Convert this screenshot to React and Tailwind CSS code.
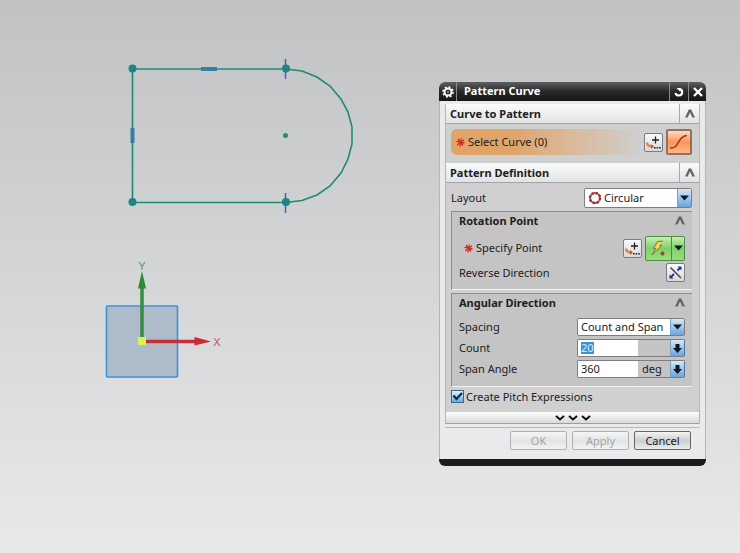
import React, { useEffect, useRef, useState } from "react";

function Sketch() {
  return (
    <svg
      width="740"
      height="553"
      viewBox="0 0 740 553"
      className="absolute left-0 top-0"
      fill="none"
    >
      {/* profile */}
      <g stroke="#1f8a72" strokeWidth="1.6">
        <path d="M286 69H132.500V202.500H286" />
        <path d="M286 69L302 71L317 77L330 86L341 99L348 112L352 127V144L348 159L341 173L330 186L317 195L302 200.500L286 202.500" />
      </g>
      <path
        d="M285.500 59V79M285.500 193V213"
        stroke="#4560b8"
        strokeWidth="1.500"
      />
      <path d="M201 69H217M132.500 128V143" stroke="#3580a2" strokeWidth="4" />
      <g fill="#1d8585">
        <circle cx="132.500" cy="68.500" r="4" />
        <circle cx="286" cy="68.500" r="4" />
        <circle cx="132.500" cy="202" r="4" />
        <circle cx="286" cy="202" r="4" />
      </g>
      <circle cx="285.500" cy="135.500" r="2.500" fill="#1f9070" />

      {/* coordinate system */}
      <rect
        x="106.500"
        y="306"
        width="71"
        height="71"
        rx="1"
        fill="#adbcc8"
        stroke="#3c92d6"
        strokeWidth="1.600"
      />
      <path d="M142 338V286" stroke="#358c42" strokeWidth="3.500" />
      <path d="M142 271L146 288.500H138Z" fill="#2e8a35" />
      <path d="M145 341.500H196" stroke="#c23038" strokeWidth="3.500" />
      <path d="M211 341.500L194.500 337V345.500Z" fill="#cc2b30" />
      <rect x="138" y="337" width="8" height="8" fill="#d6f25a" />
      <text
        x="142"
        y="270"
        textAnchor="middle"
        fill="#5a9465"
        className="font-['Liberation_Sans'] text-[11px]"
      >
        Y
      </text>
      <text
        x="217"
        y="346"
        textAnchor="middle"
        fill="#c4525a"
        className="font-['Liberation_Sans'] text-[11px]"
      >
        X
      </text>
    </svg>
  );
}

function Chevron() {
  return (
    <svg width="10" height="9" viewBox="0 0 10 9" fill="#666">
      <path d="M0 8.500L3.800 0.500H6.200L10 8.500H7.300L5 3.600L2.700 8.500Z" />
    </svg>
  );
}

function Required() {
  return (
    <svg width="9" height="9" viewBox="0 0 9 9" stroke="#d02a22" strokeWidth="1.300">
      <path d="M5.200 0.300L4 8.500M0.500 3.300L8.500 5M8 1.800L1.200 7M2 1L4.500 4.500L7 7.500" />
    </svg>
  );
}

function SectionHeader({ title }) {
  return (
    <div className="flex h-[19px] items-stretch bg-linear-to-b from-[#fbfbfb] to-[#e2e3e5]">
      <h2 className="flex-1 pl-1 font-bold leading-[19px]">{title}</h2>
      <button
        aria-label={`Collapse ${title}`}
        className="flex w-5 items-center justify-center border-l border-[#a8a8aa]"
      >
        <Chevron />
      </button>
    </div>
  );
}

function GroupHeader({ title }) {
  return (
    <div className="flex h-[17px] items-center justify-between">
      <h3 className="font-bold">{title}</h3>
      <button aria-label={`Collapse ${title}`}>
        <Chevron />
      </button>
    </div>
  );
}

function PointButton() {
  return (
    <button
      aria-label="Point Constructor"
      className="h-[19px] w-[19px] rounded-xs border border-[#7c7c80] bg-linear-to-b from-[#fafafa] to-[#d8d8dc]"
    >
      <svg width="17" height="17" viewBox="0 0 17 17">
        <path d="M7 6H14M10.500 2.500V9.500" stroke="#222" strokeWidth="1.300" />
        <path
          d="M2 8.500C2 11.500 4 12.500 8 12.500"
          stroke="#d58a5c"
          strokeWidth="2.500"
          fill="none"
        />
        <path d="M6 10L9 12.500L6 15Z" fill="#b86238" />
        <path d="M9 13H10.600V14.600H9ZM11.600 13H13.200V14.600H11.600ZM14.200 13H15.800V14.600H14.200Z" fill="#222" />
      </svg>
    </button>
  );
}

function DownTriangle() {
  return (
    <svg width="9" height="6" viewBox="0 0 9 6" fill="#101820">
      <path d="M0 0.500H9L4.500 5.500Z" />
    </svg>
  );
}

function DownArrow() {
  return (
    <svg width="9" height="9" viewBox="0 0 9 9" fill="#101820">
      <path d="M2.500 0H6.500V4H9L4.500 9L0 4H2.500Z" />
    </svg>
  );
}

function SelectArrow() {
  return (
    <span className="pointer-events-none absolute inset-y-0 right-0 flex w-[14px] items-center justify-center border-l border-[#7ba3c8] bg-linear-to-b from-[#d5e7f7] to-[#6aa5dc]">
      <DownTriangle />
    </span>
  );
}

function ValueRow({ id, label, value, onChange, unit, inputRef }) {
  return (
    <div className="flex h-[18px] items-center justify-between">
      <label htmlFor={id}>{label}</label>
      <div className="flex h-full w-[108px] rounded-xs border border-[#7e7e82] border-r-[#4d7399] bg-[#c4c4c4]">
        <div className="flex w-[60px] items-center bg-white pl-[3px]">
          <input
            id={id}
            ref={inputRef}
            value={value}
            onChange={(e) => onChange(e.target.value)}
            className="h-3 w-full leading-3 outline-none selection:bg-[#3d92d8] selection:text-[#d8f0ff]"
          />
        </div>
        <span className="flex-1 pl-1 leading-4">{unit}</span>
        <button
          aria-label={`${label} options`}
          className="flex w-[14px] items-center justify-center border-l border-[#7ba3c8] bg-linear-to-b from-[#d5e7f7] to-[#6aa5dc]"
        >
          <DownArrow />
        </button>
      </div>
    </div>
  );
}

function TitleBar() {
  return (
    <div className="flex h-[19px] items-stretch bg-linear-to-b from-[#5a5b5d] from-5% via-[#28292b] via-50% to-[#151618] text-white">
      <button
        aria-label="Dialog Options"
        className="flex w-[18px] items-center justify-center border-r border-[#8a8a8c]"
      >
        <svg width="12" height="12" viewBox="0 0 12 12" fill="none" stroke="#fff">
          <circle cx="6" cy="6" r="3.500" strokeWidth="2" />
          <circle cx="6" cy="6" r="5" strokeWidth="1.600" strokeDasharray="1.960 1.960" />
          <circle cx="6" cy="6" r="0.800" fill="#fff" stroke="none" />
        </svg>
      </button>
      <h1 className="flex-1 pl-[7px] font-bold leading-[18px]">Pattern Curve</h1>
      <button
        aria-label="Reset"
        className="flex w-[19px] items-center justify-center border-l border-[#8a8a8c]"
      >
        <svg width="10" height="10" viewBox="0 0 10 10" fill="none">
          <path d="M5.500 2C9.500 2.500 9 8.500 5 8.500C3 8.500 1.800 7.800 1.500 6" stroke="#fff" strokeWidth="2" />
          <path d="M2.500 1H6.500V5Z" fill="#fff" />
        </svg>
      </button>
      <button
        aria-label="Close"
        className="flex w-[18px] items-center justify-center border-l border-[#8a8a8c]"
      >
        <svg width="10" height="10" viewBox="0 0 10 10">
          <path d="M1 1L9 9M9 1L1 9" stroke="#fff" strokeWidth="2.400" />
        </svg>
      </button>
    </div>
  );
}

function PatternCurveDialog() {
  const [layout, setLayout] = useState("Circular");
  const [spacing, setSpacing] = useState("Count and Span");
  const [count, setCount] = useState("20");
  const [span, setSpan] = useState("360");
  const [pitch, setPitch] = useState(true);
  const countRef = useRef(null);

  useEffect(() => {
    countRef.current.focus();
    countRef.current.select();
  }, []);

  return (
    <div className="absolute left-[439px] top-[82px] w-[267px] overflow-hidden rounded-md bg-[#e9eaec] text-[11px] leading-4 text-[#202020]">
      <TitleBar />
      <div className="border-x border-[#b4b5b8] px-[5px] pt-[3px]">
        <div className="border-x border-[#b4b5b8]">
          <SectionHeader title="Curve to Pattern" />
          <div className="border-t border-[#a4a4a6] bg-[#cfd0d0] pb-2 pl-[5px] pr-[7px] pt-[5px]">
            <div className="flex h-[26px] items-center rounded-md bg-linear-to-r from-[#e0a468] from-25% to-[#cfd0d0] to-80% pl-[5px]">
              <Required />
              <span className="flex-1 pl-[3px]">Select Curve (0)</span>
              <PointButton />
              <button
                aria-label="Select Curve"
                className="ml-[3px] h-[26px] w-[26px] rounded-xs border-2 border-[#94705e] bg-linear-to-b from-[#ffd9c0] via-[#fb9458] to-[#ffb888]"
              >
                <svg width="22" height="22" viewBox="0 0 22 22" fill="none">
                  <path d="M2 17C12 18 9 5 19 4.500" stroke="#a83222" strokeWidth="1.500" />
                </svg>
              </button>
            </div>
          </div>

          <SectionHeader title="Pattern Definition" />
          <div className="border-t border-[#a4a4a6] bg-[#d0d0d1] pl-[5px] pr-[7px] pt-[5px]">
            <div className="flex h-5 items-center justify-between">
              <label htmlFor="layout">Layout</label>
              <div className="relative h-5 w-[108px] rounded-xs border border-[#7e7e82] bg-white">
                <svg width="14" height="14" viewBox="0 0 14 14" className="absolute left-[3px] top-[2px]" fill="none">
                  <circle cx="7" cy="7" r="5" stroke="#b0505a" strokeWidth="1.800" />
                  <circle cx="7" cy="7" r="5" stroke="#96343c" strokeWidth="2.600" strokeDasharray="1.960 1.960" />
                </svg>
                <select
                  id="layout"
                  value={layout}
                  onChange={(e) => setLayout(e.target.value)}
                  className="block h-full w-full appearance-none pl-[19px] outline-none"
                >
                  <option>Circular</option>
                  <option>Linear</option>
                  <option>General</option>
                </select>
                <SelectArrow />
              </div>
            </div>

            <div className="mt-[3px] border-b border-l border-t border-[#8e8e90] border-b-[#f0f0f0] bg-[#c4c4c4] px-[7px] pb-[7px]">
              <GroupHeader title="Rotation Point" />
              <div className="mt-[6px] flex h-[26px] items-center pl-[5px]">
                <Required />
                <span className="flex-1 pl-[3px]">Specify Point</span>
                <PointButton />
                <div className="ml-[3px] flex h-[25px] w-10 rounded-xs border border-[#4e8a46] bg-linear-to-b from-[#c4efb0] via-[#7fd068] to-[#96e07e]">
                  <button aria-label="Inferred Point" className="flex flex-1 items-center justify-center">
                    <svg width="20" height="20" viewBox="0 0 20 20">
                      <path d="M8.500 3.500L13.500 3L10.500 7.500H12.500L3 17L7 10.500H4.500Z" fill="#eed640" stroke="#6a6634" strokeWidth="0.800" />
                      <path d="M13 4L7 10.500" stroke="#fff8b0" strokeWidth="0.800" />
                      <circle cx="13.500" cy="15.500" r="2" fill="#b04028" />
                    </svg>
                  </button>
                  <button
                    aria-label="Point Types"
                    className="flex w-[13px] items-center justify-center border-l border-[#4e8a46]"
                  >
                    <DownTriangle />
                  </button>
                </div>
              </div>
              <div className="mt-[2px] flex h-[19px] items-center justify-between">
                <span>Reverse Direction</span>
                <button
                  aria-label="Reverse Direction"
                  className="h-[19px] w-[19px] rounded-xs border border-[#7c7c80] bg-linear-to-b from-[#fafafa] to-[#d8d8dc]"
                >
                  <svg width="17" height="17" viewBox="0 0 17 17">
                    <path d="M3.500 3.500L14 14" stroke="#444" strokeWidth="1.500" />
                    <path d="M4 13L7 10M10.500 6.500L13 4" stroke="#28307e" strokeWidth="1.800" />
                    <path d="M10.500 2.500H14.500V6.500ZM2.500 10.500V14.500H6.500Z" fill="#28307e" />
                  </svg>
                </button>
              </div>
            </div>

            <div className="mt-[3px] border-b border-l border-t border-[#8e8e90] border-b-[#f0f0f0] bg-[#c4c4c4] px-[7px] pb-2">
              <GroupHeader title="Angular Direction" />
              <div className="mt-[7px] flex flex-col gap-[3px]">
                <div className="flex h-[18px] items-center justify-between">
                  <label htmlFor="spacing">Spacing</label>
                  <div className="relative h-[18px] w-[108px] rounded-xs border border-[#7e7e82] bg-white">
                    <select
                      id="spacing"
                      value={spacing}
                      onChange={(e) => setSpacing(e.target.value)}
                      className="block h-full w-full appearance-none pl-[3px] outline-none"
                    >
                      <option>Count and Span</option>
                      <option>Count and Pitch</option>
                      <option>Pitch and Span</option>
                    </select>
                    <SelectArrow />
                  </div>
                </div>
                <ValueRow id="count" label="Count" value={count} onChange={setCount} inputRef={countRef} />
                <ValueRow id="span" label="Span Angle" value={span} onChange={setSpan} unit="deg" />
              </div>
            </div>

            <label className="flex h-[25px] items-center gap-[2px] pb-[6px]">
              <span className="relative h-[13px] w-[13px]">
                <input
                  type="checkbox"
                  checked={pitch}
                  onChange={(e) => setPitch(e.target.checked)}
                  className="peer block h-[13px] w-[13px] appearance-none border border-[#3c6484] bg-linear-to-b from-[#dff0fb] to-[#5eb0e4]"
                />
                <svg
                  width="13"
                  height="13"
                  viewBox="0 0 13 13"
                  className="pointer-events-none absolute inset-0 hidden peer-checked:block"
                >
                  <path d="M2.500 5.500L5.500 9L11 3" stroke="#142c48" strokeWidth="2.200" fill="none" />
                </svg>
              </span>
              Create Pitch Expressions
            </label>
          </div>

          <button
            aria-label="More"
            className="flex h-[12px] w-full items-center justify-center border-b border-[#a0a0a2] bg-linear-to-b from-[#fdfdfd] to-[#d8d9da]"
          >
            <svg width="36" height="6" viewBox="0 0 36 6" fill="none" stroke="#111" strokeWidth="2">
              <path d="M1 1L5 4.500L9 1M14 1L18 4.500L22 1M27 1L31 4.500L35 1" />
            </svg>
          </button>
        </div>

        <div className="mt-[3px] flex justify-end gap-[5px] border-t border-[#b8b8ba] pb-[9px] pr-[9px] pt-[3px]">
          <button disabled className="h-[19px] w-[57px] rounded-xs border border-[#b0b1b4] bg-linear-to-b from-[#f6f6f6] via-[#e2e3e4] to-[#f2f2f3] text-[#a4a4a6]">
            OK
          </button>
          <button disabled className="h-[19px] w-[57px] rounded-xs border border-[#b0b1b4] bg-linear-to-b from-[#f6f6f6] via-[#e2e3e4] to-[#f2f2f3] text-[#a4a4a6]">
            Apply
          </button>
          <button className="h-[19px] w-[57px] rounded-xs border border-[#66676a] bg-linear-to-b from-[#f4f4f4] via-[#cdced0] to-[#ececed]">
            Cancel
          </button>
        </div>
      </div>
      <div className="h-[7px] bg-[#1a1b1c]" />
    </div>
  );
}

function App() {
  return (
    <main className="relative h-screen min-h-[480px] overflow-hidden bg-linear-to-b from-[#c1c2c3] to-[#e8e9eb] font-['Noto_Sans',sans-serif]">
      <Sketch />
      <PatternCurveDialog />
    </main>
  );
}

export default App;
